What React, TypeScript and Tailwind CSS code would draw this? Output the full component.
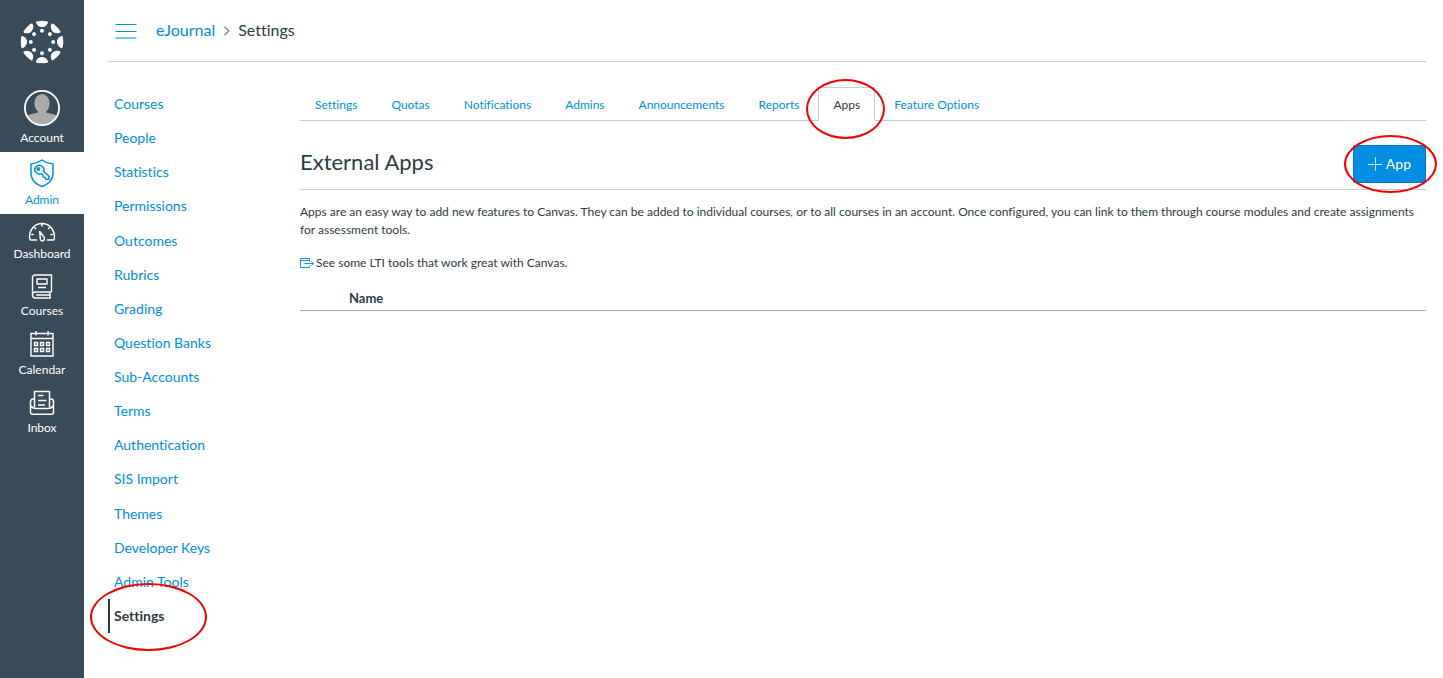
import type { ReactNode } from "react";

const adminLinks = [
  "Courses", "People", "Statistics", "Permissions", "Outcomes", "Rubrics", "Grading", "Question Banks",
  "Sub-Accounts", "Terms", "Authentication", "SIS Import", "Themes", "Developer Keys", "Admin Tools", "Settings",
];

const tabs = ["Settings", "Quotas", "Notifications", "Admins", "Announcements", "Reports", "Apps", "Feature Options"];

function CanvasLogo() {
  const turns = [0, 45, 90, 135, 180, 225, 270, 315];
  return (
    <svg width="44" height="44" viewBox="-22 -22 44 44" fill="white" aria-hidden="true">
      <clipPath id="logo-disc">
        <circle r="21.3" />
      </clipPath>
      <g clipPath="url(#logo-disc)">
        {turns.map((t) => (
          <circle key={t} cy="-21.3" r="6.3" transform={`rotate(${t})`} />
        ))}
      </g>
      {turns.map((t) => (
        <circle key={t} cy="-11.2" r="2" transform={`rotate(${t})`} />
      ))}
    </svg>
  );
}

function AvatarIcon() {
  return (
    <svg width="36" height="36" viewBox="0 0 36 36" aria-hidden="true">
      <clipPath id="avatar-disc">
        <circle cx="18" cy="18" r="17" />
      </clipPath>
      <g clipPath="url(#avatar-disc)" fill="#ababab">
        <ellipse cx="18" cy="13.5" rx="7.6" ry="9.5" />
        <path d="M14 20h8v2.5c4 1 9 1.500 12 4V36H2v-9.500c3-2.500 8-3 12-4z" />
      </g>
      <circle cx="18" cy="18" r="17.1" fill="none" stroke="white" strokeWidth="1.8" />
    </svg>
  );
}

function AdminIcon() {
  return (
    <svg width="26" height="30" viewBox="0 0 26 30" fill="none" stroke="currentColor" strokeWidth="1.500" strokeLinejoin="round" aria-hidden="true">
      <path d="M13 2C9.500 4.500 6 5.700 2 6v9.500c0 6 4.500 10.500 11 13 6.500-2.500 11-7 11-13V6c-4-.3-7.500-1.500-11-4z" />
      <path d="M7 8.700c1.900-1.900 5-1.900 6.700 0 1.300 1.300 1.600 3 1 4.600l5.300 5-.2 2.900-3.200.1-.5-1.900-2-.3-.3-2.100-1.600-1.400c-1.700.6-3.600.3-5-1.100-1.900-1.800-1.900-4-.2-5.800z" />
      <circle cx="9.300" cy="11" r="1.200" />
    </svg>
  );
}

function DashboardIcon() {
  return (
    <svg width="28" height="22" viewBox="0 0 28 22" fill="none" stroke="currentColor" strokeWidth="1.500" strokeLinejoin="round" strokeLinecap="round" aria-hidden="true">
      <path d="M8.500 20H2.800c-.8 0-1.100-.6-1.200-1.500C1 10.500 6 3.500 14 3.500s13 7 12.400 15c-.1.900-.4 1.500-1.200 1.500h-5.700" />
      <path d="M14 3.500V6M6.800 7.800l.8.8M21.200 7.800l-.8.8M3.800 14.500h1.200M23 14.500h1.200" />
      <path d="M11.700 11.500l4.200 5.500c1 1.600.5 3.200-.8 3.700s-2.600-.3-2.800-1.900z" />
    </svg>
  );
}

function CoursesIcon() {
  return (
    <svg width="22" height="25" viewBox="0 0 22 25" fill="none" stroke="currentColor" strokeWidth="1.400" strokeLinejoin="round" aria-hidden="true">
      <path d="M20.500 18V1H4C2.500 1 1.500 2 1.500 3.500V21c0 2 1 3 3 3H20M20.500 18H4.500c-1.700 0-3 1-3 3M19 18v6M5 21h14" />
      <path d="M6 5h10v5H6zM7 13.500h8" />
    </svg>
  );
}

function CalendarIcon() {
  return (
    <svg width="24" height="27" viewBox="0 0 24 27" fill="none" stroke="currentColor" strokeWidth="1.400" aria-hidden="true">
      <path d="M1 2.500h22V25H1zM1 7.500h22M6 0v4.500M18 0v4.500" />
      <path d="M4.500 11.500h3v3h-3zM10.500 11.500h3v3h-3zM16.500 11.500h3v3h-3zM4.500 17.500h3v3h-3zM10.500 17.500h3v3h-3zM16.500 17.500h3v3h-3z" />
    </svg>
  );
}

function InboxIcon() {
  return (
    <svg width="26" height="26" viewBox="0 0 26 26" fill="none" stroke="currentColor" strokeWidth="1.500" strokeLinejoin="round" aria-hidden="true">
      <path d="M5.500 17V1.500h15V17M9 5.500h5.500M9 10.500h8.500M9 15h7" />
      <path d="M5.500 9H4c-1.700 0-2.500 1-2.500 2.500v11c0 1 .6 1.700 1.700 1.700h19.600c1.100 0 1.700-.7 1.700-1.700v-11c0-1.500-.8-2.500-2.500-2.500h-1.500M1.500 15.500C3 17.500 4.500 18.500 7 18.500h12c2.500 0 4-1 5.500-3" />
    </svg>
  );
}

function NavItem({ label, icon, active }: { label: string; icon: ReactNode; active?: boolean }) {
  return (
    <li>
      <a
        href="#"
        aria-current={active ? "page" : undefined}
        className={`flex flex-col items-center gap-1 py-1.5 text-xs leading-4 ${active ? "bg-white text-[#008ee2]" : "text-white"}`}
      >
        {icon}
        {label}
      </a>
    </li>
  );
}

function Highlight({ className }: { className: string }) {
  return (
    <span
      aria-hidden="true"
      className={`pointer-events-none absolute z-10 rounded-[50%] border-2 border-[#f50000] ${className}`}
    />
  );
}

export default function App() {
  return (
    <div className="flex min-h-screen bg-white font-[Lato,sans-serif] text-[#2d3b45] [font-variant-ligatures:none]">
      <nav aria-label="Global" className="w-21 shrink-0 bg-[#394b58]">
        <a href="#" aria-label="Home" className="flex h-21 items-center justify-center">
          <CanvasLogo />
        </a>
        <ul>
          <NavItem label="Account" icon={<AvatarIcon />} />
          <NavItem label="Admin" icon={<AdminIcon />} active />
          <NavItem label="Dashboard" icon={<DashboardIcon />} />
          <NavItem label="Courses" icon={<CoursesIcon />} />
          <NavItem label="Calendar" icon={<CalendarIcon />} />
          <NavItem label="Inbox" icon={<InboxIcon />} />
        </ul>
      </nav>

      <div className="min-w-0 flex-1 pr-[17px] pl-6">
        <header className="flex h-[62px] items-center border-b border-[#c7cdd1] pl-[7px]">
          <button type="button" aria-label="Toggle menu" className="text-[#008ee2]">
            <svg width="22" height="16" viewBox="0 0 22 16" stroke="currentColor" strokeWidth="1.200" aria-hidden="true">
              <path d="M.5 1.500h21M.5 8.500h21M.5 15h21" />
            </svg>
          </button>
          <nav aria-label="Breadcrumb" className="ml-[19px] flex items-center gap-2 pb-0.5 text-base">
            <a href="#" className="text-[#008ee2]">eJournal</a>
            <svg width="7" height="10" viewBox="0 0 7 10" className="mt-0.5" fill="none" stroke="#73818c" strokeWidth="1.200" aria-hidden="true">
              <path d="M1.500 .7 6 5 1.500 9.300" />
            </svg>
            <span>Settings</span>
          </nav>
        </header>

        <div className="flex pt-[25px]">
          <nav aria-label="Administration" className="w-48 shrink-0">
            <ul className="flex h-[546px] flex-col text-sm">
              {adminLinks.map((link) => {
                const current = link === "Settings";
                return (
                  <li key={link} className="relative flex-1">
                    <a
                      href="#"
                      aria-current={current ? "page" : undefined}
                      className={`flex h-full items-center ${current ? "border-l-2 border-[#2d3b45] pl-1 font-bold" : "pl-1.5 text-[#008ee2]"}`}
                    >
                      {link}
                    </a>
                    {current && <Highlight className="-top-4 -left-[18px] h-[68px] w-[117px]" />}
                  </li>
                );
              })}
            </ul>
          </nav>

          <main className="min-w-0 flex-1">
            <div role="tablist" className="flex h-[34px] gap-1 border-b border-[#c7cdd1] text-xs">
              {tabs.map((tab) => {
                const selected = tab === "Apps";
                return (
                  <div key={tab} className="relative">
                    <button
                      type="button"
                      role="tab"
                      aria-selected={selected}
                      className={`h-[34px] border px-3.5 pt-0.5 ${selected ? "border-[#c7cdd1] border-b-white bg-white" : "border-transparent text-[#008ee2]"}`}
                    >
                      {tab}
                    </button>
                    {selected && <Highlight className="-top-2 -left-3 h-[60px] w-[79px]" />}
                  </div>
                );
              })}
            </div>

            <div className="flex items-start justify-between border-b border-[#c7cdd1] pt-6 pb-1.5">
              <h1 className="text-[22px] leading-[34px]">External Apps</h1>
              <div className="relative">
                <button
                  type="button"
                  className="flex h-[38px] items-center gap-1 rounded-xs border border-[#0079c1] bg-[#008ee2] px-3.5 text-sm text-white"
                >
                  <svg width="14" height="14" viewBox="0 0 14 14" stroke="currentColor" strokeWidth="1" strokeOpacity="0.8" aria-hidden="true">
                    <path d="M7.500 0v14M0 7.500h14" />
                  </svg>
                  App
                </button>
                <Highlight className="-top-2.5 -left-[9px] h-[58px] w-[93px]" />
              </div>
            </div>

            <p className="mt-[13px] text-xs leading-[18px]">
              Apps are an easy way to add new features to Canvas. They can be added to individual courses, or to all
              courses in an account. Once configured, you can link to them through course modules and create assignments
              for assessment tools.
            </p>
            <p className="mt-[15px] text-xs leading-[18px]">
              <a href="#" className="flex items-center gap-0.5">
                <svg width="14" height="12" viewBox="0 0 14 12" fill="none" stroke="#008ee2" strokeWidth="0.9" aria-hidden="true">
                  <path d="M9.500 4.500V1.500h-9v9h9V8.500M.5 3.500h9M4.500 6.500h9M11.300 4.300l2.200 2.200-2.200 2.200" />
                </svg>
                See some LTI tools that work great with Canvas.
              </a>
            </p>

            <table className="mt-[13px] w-full border-b border-[#a5afb5] text-left text-[13px] leading-[18px]">
              <thead>
                <tr>
                  <th scope="col" className="pt-1 pb-[3px] pl-[49px]">Name</th>
                </tr>
              </thead>
            </table>
          </main>
        </div>
      </div>
    </div>
  );
}
